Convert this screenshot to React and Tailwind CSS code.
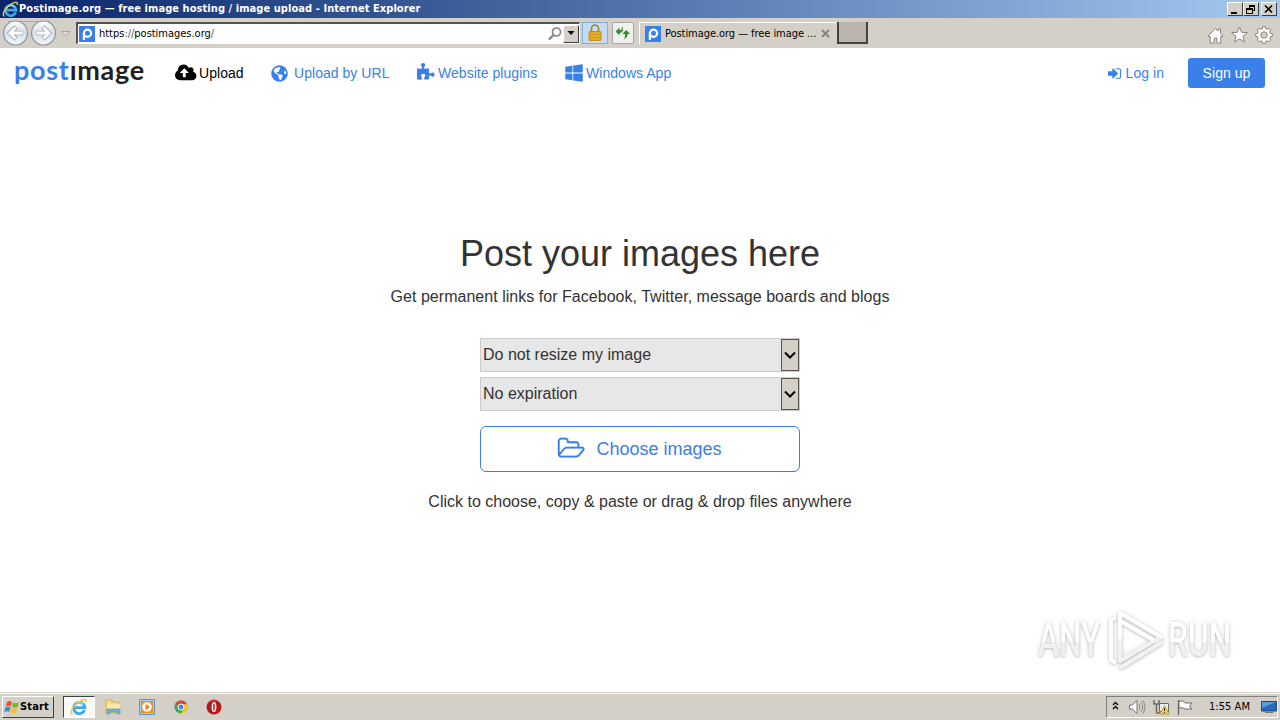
import React from "react";
import { FaGlobeAmericas, FaWindows } from "react-icons/fa";

const ui = "font-['DejaVu_Sans_Condensed','DejaVu_Sans',sans-serif]";

function IELogo({ size }) {
  return (
    <svg width={size} height={size} viewBox="0 0 16 16" fill="none" className="shrink-0">
      <path d="M12.9 10.6A5 5 0 1 1 13.2 8.6H4.5" stroke="#3fa9ea" strokeWidth="2.5" />
      <path d="M4.2 7.4A4.4 4.4 0 0 1 12 6" stroke="#9adcf8" strokeWidth="1" />
      <path d="M2.2 14.6C-.8 12.600 3.500 5.300 9 2.600c4-2 6.200-1.600 5.300 1.200" stroke="#f3c83a" strokeWidth="1.300" />
    </svg>
  );
}

function PIcon() {
  return (
    <svg width="16" height="16" viewBox="0 0 16 16" fill="none" className="shrink-0">
      <rect width="16" height="16" fill="#3a80ea" />
      <circle cx="8.500" cy="7.200" r="3.600" stroke="#fff" strokeWidth="2.200" />
      <path d="M4.900 7v7" stroke="#fff" strokeWidth="2.200" />
    </svg>
  );
}

function TitleButton({ children }) {
  return (
    <div className="flex h-[14px] w-4 items-center justify-center border border-t-white border-l-white border-r-[#404040] border-b-[#404040] bg-[#d4d0c8]">
      <svg width="12" height="11" viewBox="0 0 12 11" fill="none" stroke="#000" shapeRendering="crispEdges">{children}</svg>
    </div>
  );
}

function TitleBar() {
  return (
    <header className="flex h-[18px] items-center bg-linear-to-r from-[#0a246a] to-[#a6caf0] pr-[3px] pl-[2px]">
      <IELogo size={17} />
      <span className="flex-1 whitespace-nowrap font-['DejaVu_Sans_Condensed','DejaVu_Sans',sans-serif] text-[11px] leading-[18px] font-bold tracking-[0.065px] text-white">
        Postimage.org — free image hosting / image upload - Internet Explorer
      </span>
      <div className="flex">
        <TitleButton><path d="M2 8.500h6" strokeWidth="2" /></TitleButton>
        <TitleButton><path d="M4.500 4V1.500h5v5H8M4 2h6M1.500 4.500h6v5h-6zM1 5h7" /></TitleButton>
        <div className="w-[2px]" />
        <TitleButton><path d="M2 1.500l7 7M9 1.500l-7 7" strokeWidth="1.600" shapeRendering="auto" /></TitleButton>
      </div>
    </header>
  );
}

function NavButtons() {
  return (
    <svg width="74" height="30" viewBox="0 0 74 30" fill="none" className="shrink-0">
      <defs>
        <linearGradient id="nav" x1="0" y1="0" x2="0" y2="1">
          <stop offset="0" stopColor="#fdfdfe" />
          <stop offset=".5" stopColor="#d5dde5" />
          <stop offset="1" stopColor="#f4fbff" />
        </linearGradient>
      </defs>
      <path d="M8 3.500h42" stroke="#aaa9a9" />
      <circle cx="15.500" cy="15" r="12" fill="url(#nav)" stroke="#8b99a5" strokeWidth="1.200" />
      <circle cx="43.500" cy="15" r="12" fill="url(#nav)" stroke="#8b99a5" strokeWidth="1.200" />
      <path d="M23 15H10m6-6l-6 6 6 6M36 15h13m-6-6l6 6-6 6" stroke="#a3adb6" strokeWidth="4.600" />
      <path d="M22.500 15H10m5.500-5.500L10 15l5.500 5.500M36.500 15H49m-5.500-5.500L49 15l-5.500 5.500" stroke="#fff" strokeWidth="2.800" />
      <path d="M61.500 13.500h8l-4 4.500z" fill="#e4e1dc" stroke="#aaa69f" />
    </svg>
  );
}

function BrowserBar() {
  return (
    <div className="flex h-[30px] items-start bg-[#d4d0c8]">
      <NavButtons />
      <div className="mt-1 ml-[2px] flex h-[22px] w-[504px] items-center border-t-2 border-l-2 border-t-[#55524f] border-l-[#55524f] border-r border-b border-r-white border-b-white bg-white pl-[1px]">
        <PIcon />
        <span className={`${ui} ml-1 flex-1 pt-px text-[11px] leading-[18px] tracking-[-0.020px] text-black`}>
          https<span className="text-[#555]">://</span>postimages.org<span className="text-[#555]">/</span>
        </span>
        <svg width="16" height="16" viewBox="0 0 16 16" fill="none" stroke="#858585">
          <circle cx="9.500" cy="6" r="4" strokeWidth="1.700" />
          <path d="M6.500 9l-4.500 4.500" strokeWidth="2.400" />
        </svg>
        <div className="flex h-[18px] w-4 items-center justify-center border border-t-white border-l-white border-r-[#404040] border-b-[#404040] bg-[#d4d0c8]">
          <svg width="8" height="5" viewBox="0 0 8 5"><path d="M.5 0h7L4 4z" fill="#000" /></svg>
        </div>
      </div>
      <div className="mt-1 ml-[2px] flex h-[22px] w-[26px] items-center justify-center border border-[#7eb0e5] bg-[#c5dcf3]">
        <svg width="16" height="18" viewBox="0 0 16 18" fill="none">
          <path d="M4.500 9V4.500a3.500 3.500 0 0 1 7 0V9" stroke="#a58530" strokeWidth="1.700" />
          <rect x="2" y="7.500" width="12" height="9" rx=".8" fill="#e7ad20" stroke="#b98412" strokeWidth=".8" />
          <path d="M2.500 10.500h11M2.500 13.500h11" stroke="#c8921a" strokeWidth=".7" />
        </svg>
      </div>
      <div className="mt-1 ml-1 flex h-[22px] w-[22px] items-center justify-center rounded-[2px] border border-[#aaa8a4] bg-[#f1f0ee]">
        <svg width="16" height="16" viewBox="0 0 16 16" fill="#368c35">
          <path d="M0.500 6.500l4-4V5h2c0-1.500.3-2.500 1-3.500C8.500 4.500 7.800 7.500 5 8h-.5v2.500z" />
          <path d="M7.200 9L11.200 5l4 4h-2.700v1c0 2-1.700 3.500-3.700 4 1.200-1.500 1.200-2.500 1.200-5z" />
        </svg>
      </div>
      <div className="mt-1 ml-[5px] flex h-[22px] w-[197px] items-center border-t border-l border-white pl-[5px]">
        <PIcon />
        <span className={`${ui} ml-1 flex-1 whitespace-nowrap pt-[2px] text-[11px] tracking-[-0.060px] text-black`}>Postimage.org — free image ...</span>
        <svg width="9" height="9" viewBox="0 0 9 9" className="mr-[6px]"><path d="M1 1l7 7M8 1L1 8" stroke="#85817b" strokeWidth="1.800" /></svg>
      </div>
      <div className="mt-1 ml-[1px] h-[22px] w-[31px] border-r-2 border-b-2 border-l-2 border-[#45423f] border-l-[#45423f] bg-[#bbb4ad]" />
      <svg width="70" height="20" viewBox="0 0 70 20" fill="#fff" stroke="#89857f" className="mt-[7px] mr-[7px] ml-auto shrink-0">
        <path d="M5 11L12.500 3.500 15 6V4h2.500v4.500L20 11l-1 1.200-1.200-1V18h-4v-5h-2.600v5h-4v-6.800L6 12.200z" />
        <path d="M36.500 2l2.200 5.300 5.700.3-4.400 3.700 1.500 5.700-5-3.100-5 3.100 1.500-5.700-4.400-3.700 5.700-.3z" />
        <path d="M59.700 2.500h2.600l.5 2 1.400.6 1.800-1.100 1.800 1.800L66.700 7.600l.6 1.400 2 .5v2.600l-2 .5-.6 1.400 1.100 1.800-1.800 1.800-1.800-1.100-1.400.6-.5 2h-2.600l-.5-2-1.400-.6L56 17.600l-1.800-1.800 1.100-1.800-.6-1.400-2-.5V9.500l2-.5.6-1.400L54.200 5.800 56 4l1.800 1.100 1.400-.6z" transform="translate(0 -.8)" />
        <circle cx="61" cy="10" r="3.200" fill="#d4d0c8" />
      </svg>
    </div>
  );
}

function CloudUpload() {
  return (
    <svg width="22" height="20" viewBox="0 0 1971 1792" fill="currentColor">
      <path d="M1216 864q0-14-9-23l-352-352q-9-9-23-9t-23 9l-351 351q-10 12-10 24 0 14 9 23t23 9h224v352q0 13 9.500 22.500t22.500 9.500h192q13 0 22.500-9.500t9.500-22.500v-352h224q13 0 22.500-9.500t9.500-22.500zM1920 1152q0 159-112.500 271.500t-271.500 112.500h-1088q-185 0-316.500-131.500t-131.500-316.500q0-130 70-240t188-165q-2-30-2-43 0-212 150-362t362-150q156 0 285.500 87t188.500 231q71-62 166-62 106 0 181 75t75 181q0 76-41 138 130 31 213.500 135.500t83.500 238.500z" />
    </svg>
  );
}

function PuzzlePiece() {
  return (
    <svg width="19" height="19" viewBox="64 0 1792 1792" fill="currentColor" className="-mt-[2px]">
      <path d="M1728 1098q0 81-44.500 135t-123.500 54q-41 0-77.500-17.500t-59-38-56.500-38-71-17.500q-110 0-110 124 0 39 16 115t15 115v5q-22 0-33 1-34 3-97.500 11.500t-115.500 13.500-98 5q-61 0-103-26.500t-42-83.500q0-37 17.500-71t38-56.500 38-59 17.500-77.500q0-79-54-123.500t-135-44.500q-84 0-143 45.500t-59 127.500q0 43 15 83t33.500 64.500 33.500 53 15 50.500q0 45-46 89-37 35-117 35-95 0-245-24-9-2-27.500-4t-27.500-4l-13-2q-1 0-3-1-2 0-2-1v-1024q2 1 17.500 3.500t34 5 21.500 3.500q150 24 245 24 80 0 117-35 46-44 46-89 0-22-15-50.500t-33.500-53-33.500-64.500-15-83q0-82 59-127.500t144-45.500q80 0 134 44.500t54 123.500q0 41-17.500 77.500t-38 59-38 56.500-17.500 71q0 57 42 83.500t103 26.500q64 0 180-15t163-17v2q-1 2-3.500 17.500t-5 34-3.500 21.500q-24 150-24 245 0 80 35 117 44 46 89 46 22 0 50.500-15t53-33.500 64.500-33.500 83-15q82 0 127.500 59t45.500 143z" />
    </svg>
  );
}

function SignIn() {
  return (
    <svg width="14" height="15" viewBox="0 0 1672 1792" fill="currentColor">
      <path d="M1184 896q0 26-19 45l-544 544q-19 19-45 19t-45-19-19-45v-288h-448q-26 0-45-19t-19-45v-384q0-26 19-45t45-19h448v-288q0-26 19-45t45-19 45 19l544 544q19 19 19 45zM1568 544v704q0 119-84.500 203.500t-203.500 84.500h-320q-13 0-22.500-9.500t-9.500-22.500q-1-4-1-20t.5-26.500 3-23.500 10-19.500 20.500-6.500h320q66 0 113-47t47-113v-704q0-66-47-113t-113-47h-312l-11.500-1-11.500-3-8-5.500-7-9-2-13.500q-1-4-1-20t.5-26.500 3-23.500 10-19.500 20.500-6.500h320q119 0 203.500 84.500t84.500 203.500z" />
    </svg>
  );
}

function FolderOpen() {
  return (
    <svg width="28" height="25" viewBox="0 0 2007 1792" fill="currentColor" stroke="currentColor" strokeWidth="12" className="-ml-px -mt-px">
      <path d="M1845 931q0-35-53-35h-1088q-40 0-85.500 21.500t-71.500 52.500l-294 363q-18 24-18 40 0 35 53 35h1088q40 0 86-22t71-53l294-363q18-22 18-39zM704 768h768v-160q0-40-28-68t-68-28h-576q-40 0-68-28t-28-68v-64q0-40-28-68t-68-28h-320q-40 0-68 28t-28 68v853l256-315q44-53 116-87.500t140-34.500zM1973 931q0 62-46 120l-295 363q-43 53-116 87.500t-140 34.500h-1088q-92 0-158-66t-66-158v-960q0-92 66-158t158-66h320q92 0 158 66t66 158v32h544q92 0 158 66t66 158v160h192q54 0 99 24.500t67 70.500q15 32 15 68z" />
    </svg>
  );
}

function SiteNav() {
  return (
    <nav className="flex h-[50px] items-center pr-[15px] pl-[14px] text-sm tracking-[0.040px] whitespace-nowrap text-[#3a80ea]">
      <div className="w-[161px] pb-[7px] font-['Lato',sans-serif] text-[27px] leading-[30px] font-bold tracking-[0.720px]">
        post<span className="text-[#231f20]">ımage</span>
      </div>
      <a className="flex w-[96px] items-center gap-[2px] text-black"><CloudUpload />Upload</a>
      <a className="flex w-[146px] items-center gap-[6px]"><FaGlobeAmericas size={17} />Upload by URL</a>
      <a className="flex w-[148px] items-center gap-[2px]"><PuzzlePiece />Website plugins</a>
      <a className="flex items-center gap-[3px]"><FaWindows size={20} className="w-[18px]" />Windows App</a>
      <a className="ml-auto flex items-center gap-1"><SignIn />Log in</a>
      <a className="ml-6 flex h-[30px] w-[77px] items-center justify-center rounded-[3px] bg-[#3a80ea] text-white">Sign up</a>
    </nav>
  );
}

function Select({ label }) {
  return (
    <div className="flex h-[34px] w-80 items-stretch border border-[#cbcbcb] bg-[#e7e7e7] text-base text-[#333]">
      <span className="flex-1 pl-[2px] leading-[31px]">{label}</span>
      <div className="flex w-[18px] items-center justify-center border border-[#57534f] bg-[#d4d0c8]">
        <svg width="12" height="8" viewBox="0 0 12 8" fill="none"><path d="M1 1.500l5 5 5-5" stroke="#000" strokeWidth="2" /></svg>
      </div>
    </div>
  );
}

function WatermarkWord({ children }) {
  return (
    <span className="w-[66px] shrink-0 origin-left scale-x-[0.660]">
      <span className="bg-linear-to-b from-white from-55% to-[#f0f0f0] to-55% bg-clip-text whitespace-nowrap text-transparent">{children}</span>
    </span>
  );
}

function Watermark() {
  return (
    <div className="absolute right-[46px] bottom-[20px] flex h-[64px] w-[196px] items-center font-['Roboto',sans-serif] text-[48px] leading-none font-medium [filter:drop-shadow(0_1px_1px_rgb(0_0_0/0.16))_drop-shadow(0_0_2px_rgb(0_0_0/0.16))]">
      <WatermarkWord>ANY</WatermarkWord>
      <svg width="58" height="64" viewBox="0 0 58 64" fill="none" stroke="#fff" strokeWidth="4" strokeLinejoin="round" className="mr-[2px] ml-[4px] shrink-0">
        <path d="M12 32V5l41 24-6 4-35-20" />
        <path d="M12 31v22l41-24" stroke="#f2f2f2" />
        <path d="M8 10l-5 2v40l5 3" />
        <path d="M12 60l42-26" stroke="#f2f2f2" />
      </svg>
      <WatermarkWord>RUN</WatermarkWord>
    </div>
  );
}

function Taskbar() {
  return (
    <footer className="flex h-7 items-center border-t border-[#d4d0c8] bg-[#d4d0c8] pr-[2px] pl-[2px] shadow-[inset_0_1px_0_#fff]">
      <div className={`${ui} mt-px flex h-[22px] w-[52px] items-center border border-t-white border-l-white border-r-[#404040] border-b-[#404040] pl-[1px] text-[11px] font-bold text-black`}>
        <svg width="16" height="16" viewBox="0 0 16 16" className="shrink-0">
          <path d="M3 3c2-1.500 3.500-1 5 0L6.800 7.500C5.300 6.500 3.500 6.500 1.800 7.500z" fill="#e4572b" />
          <path d="M9 3.500c2 1 3.500.8 6-.3L13.700 8c-2 1-3.500.8-5.700-.2z" fill="#76b83f" />
          <path d="M1.500 8.500c2-1.200 3.400-1 5-.2l-1.200 4.400c-1.500-.8-3-.8-5 .3z" fill="#3f83d5" />
          <path d="M7.600 8.800c2 1 3.600 1 5.800.1L12 13.500c-2 .9-3.500.7-5.600-.3z" fill="#f5bd31" />
        </svg>
        <span className="pt-px tracking-[0.150px]">Start</span>
      </div>
      <div className="mt-px ml-[9px] flex h-[22px] w-8 items-center justify-center border border-t-[#404040] border-l-[#404040] border-r-white border-b-white bg-[#fbfaf9]"><IELogo size={18} /></div>
      <svg width="18" height="18" viewBox="0 0 18 18" className="mt-px ml-[9px]">
        <path d="M2 2h5l1 2h7v11H2z" fill="#f3db83" stroke="#c4a546" strokeWidth=".7" />
        <path d="M3 6h13v6H3z" fill="#f9e9a8" />
        <path d="M3 16v-5h13v5h-3v-2H6v2z" fill="#67b6e3" stroke="#4594c4" strokeWidth=".6" />
      </svg>
      <svg width="16" height="16" viewBox="0 0 16 16" className="mt-px ml-[17px]">
        <path d="M.5.5h15v15H.5z" fill="#a6cced" stroke="#5998ce" />
        <path d="M2 2h12v12H2z" fill="#ee8d1c" />
        <circle cx="8" cy="8" r="4.800" fill="#fff" /><path d="M6.500 5l4.500 3-4.500 3z" fill="#e97b11" />
      </svg>
      <svg width="14" height="14" viewBox="0 0 14 14" className="mt-px ml-[19px]">
        <circle cx="7" cy="7" r="6.500" fill="#44a354" />
        <path d="M7 7L1.200 4A6.500 6.500 0 0 1 13 4.500z" fill="#dc4637" />
        <path d="M7 4.200h6A6.500 6.500 0 0 1 7 13.500L10 8z" fill="#f5c52c" />
        <circle cx="7" cy="7" r="3" fill="#4788db" stroke="#fff" />
      </svg>
      <svg width="16" height="16" viewBox="0 0 16 16" className="mt-px ml-[18px]">
        <circle cx="8" cy="8" r="7.500" fill="#b61918" /><path d="M3 3a7 7 0 0 1 10 0" stroke="#dd6662" fill="none" />
        <ellipse cx="8" cy="8" rx="2.400" ry="5" fill="#fff" /><ellipse cx="8" cy="8" rx=".8" ry="4" fill="#b61918" />
      </svg>
      <div className="mt-px ml-auto flex h-[22px] w-[172px] items-center border border-t-[#808080] border-l-[#808080] border-r-white border-b-white pl-[5px]">
        <svg width="82" height="18" viewBox="0 0 82 18" fill="none">
          <path d="M1 8l2.500-2.500L6 8M1 12l2.500-2.500L6 12" stroke="#000" strokeWidth="1.300" transform="translate(0 -1)" />
          <path d="M17.500 7h3L25 2.500v13L20.500 11h-3z" fill="#fff" stroke="#76746f" />
          <path d="M27 6q2 3 0 6M29 4q3.500 5 0 10M31 2.500q4 6.500 0 13" stroke="#8b8984" />
          <path d="M42 2v4h5V2M44.500 6v9M44.500 15H48" stroke="#6a6865" strokeWidth="1.500" />
          <path d="M47.500 5.500h9v8h-9z" fill="#e8edf0" stroke="#6a6865" />
          <path d="M52.500 7.500l4.500 8.500h-9z" fill="#ffd33a" stroke="#b98b13" strokeWidth=".7" /><path d="M52.500 10v3m0 1v1" stroke="#222" />
          <path d="M66.500 2v15" stroke="#6a6865" strokeWidth="1.300" />
          <path d="M67 3q4-1 6.500 2H80l-2.500 3L80 11h-7q-2-2-6-1z" fill="#fff" stroke="#6a6865" />
        </svg>
        <span className={`${ui} ml-[15px] pt-px text-[11px] tracking-[0.050px] whitespace-nowrap text-black`}>1:55 AM</span>
        <svg width="16" height="14" viewBox="0 0 16 14" className="ml-auto"><path d="M.5 1.500h15v9.500H.5z" fill="#2769bd" stroke="#174787" /><path d="M1 2h14L1 8z" fill="#5b9be0" /><path d="M4 12.500h8" stroke="#777" /></svg>
      </div>
    </footer>
  );
}

export default function App() {
  return (
    <div className="relative flex h-[720px] w-[1280px] flex-col overflow-hidden bg-white font-['Liberation_Sans',sans-serif]">
      <TitleBar />
      <BrowserBar />
      <main className="relative flex flex-1 flex-col">
        <SiteNav />
        <section className="flex flex-col items-center text-[#333]">
          <h1 className="mt-[134px] text-[36px] leading-[44px]">Post your images here</h1>
          <p className="mt-[9px] text-base leading-6 tracking-[0.030px]">Get permanent links for Facebook, Twitter, message boards and blogs</p>
          <div className="mt-[29px] flex flex-col gap-[5px]">
            <Select label="Do not resize my image" />
            <Select label="No expiration" />
          </div>
          <button className="mt-[15px] flex h-[46px] w-80 items-center justify-center gap-[11px] rounded-[6px] border border-[#3a80ea] text-lg text-[#3a80ea]">
            <FolderOpen />
            <span>Choose images</span>
          </button>
          <p className="mt-[18px] text-base leading-6">Click to choose, copy &amp; paste or drag &amp; drop files anywhere</p>
        </section>
        <Watermark />
      </main>
      <Taskbar />
    </div>
  );
}
